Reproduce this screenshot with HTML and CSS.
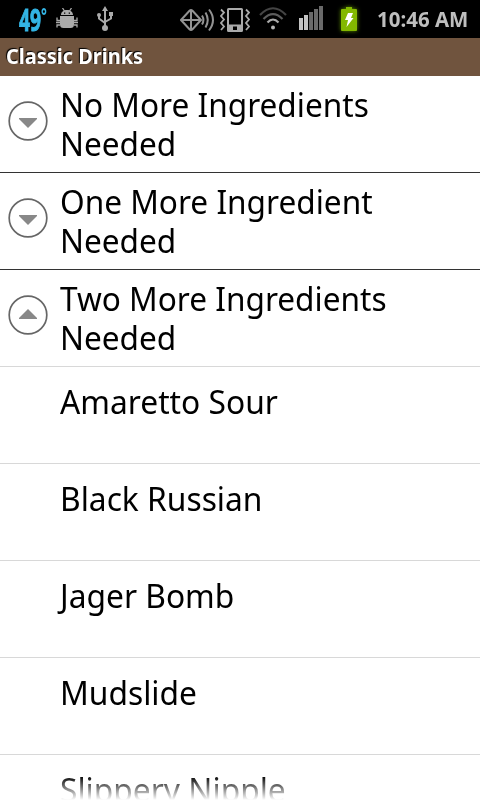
FILE: index.html
```html
<!DOCTYPE html>
<html lang="en">
<head>
  <meta charset="UTF-8">
  <meta name="viewport" content="width=device-width, initial-scale=1.0">
  <title>Classic Drinks</title>
  <link rel="stylesheet" href="styles.css">
</head>
<body>

<div class="status-bar">
  <div class="temp">49<span class="degree">°</span></div>
  <!-- debug, usb -->
  <svg class="icon debug" width="22" height="22" viewBox="0 0 22 22">
    <path fill="#aaa" d="M5 7C5 4 7.500 2 11 2s6 2 6 5zM4 8h14v8.500q0 3.500-3.500 3.500h-7Q4 20 4 16.500z"/>
    <path stroke="#aaa" stroke-width="1.300" fill="none" d="M6.500 0l2 3M15.500 0l-2 3M4 12.500H1V9.500M4 14.500H0M4 17H1v2.500M18 12.500h3V9.500M18 14.500h4M18 17h3v2.500"/>
    <path fill="#000" d="M8 4.500h1.300v1.300H8zM12.700 4.500H14v1.300h-1.300z"/>
  </svg>
  <svg class="icon usb" width="18" height="26" viewBox="0 0 18 26">
    <g fill="#aaa">
      <path d="M6 5l3-5 3 5zM13 6h4v4h-4z"/>
      <circle cx="3" cy="9" r="2"/>
      <circle cx="9" cy="22" r="3"/>
    </g>
    <path stroke="#aaa" stroke-width="2" fill="none" d="M9 4v17M3 9v3.500l6 4.500M15 9v3.500l-6 3.500"/>
  </svg>
  <!-- nfc, vibrate, wifi, signal, battery -->
  <svg class="icon nfc" width="36" height="24" viewBox="0 0 36 24">
    <g stroke="#929292" stroke-width="2" fill="none">
      <path d="M1 12L9.500 2.800Q11 1.300 12.500 2.800L21 12l-8.500 9.200Q11 22.700 9.500 21.200zM1 12h20M11 2v20"/>
      <path d="M22 7.500q2.800 4.500 0 9M25.500 4.500q4.500 7.500 0 15M29 1.500q8 10.500 0 21"/>
    </g>
  </svg>
  <svg class="icon vibrate" width="30" height="24" viewBox="0 0 30 24">
    <path fill="#aaa" fill-rule="evenodd" d="M8.500 0h13q1.500 0 1.500 1.500v21q0 1.500-1.500 1.500h-13Q7 24 7 22.500v-21Q7 0 8.500 0zM9 2v14.500h12V2zM13 18.500v3.500h4v-3.500z"/>
    <path stroke="#aaa" stroke-width="1.800" fill="none" d="M1 1.500l3 3-3 3.500 3 3.500-3 3.500 3 3.500-3 3.500M26 1.500l3 3-3 3.500 3 3.500-3 3.500 3 3.500-3 3.500"/>
  </svg>
  <svg class="icon wifi" width="28" height="24" viewBox="0 0 28 24">
    <g fill="none" stroke-width="2.200">
      <path stroke="#444" d="M1 8Q14-5.500 27 8"/>
      <path stroke="#5c5c5c" d="M4.500 12Q14 2.500 23.500 12"/>
      <path stroke="#aaa" d="M8.500 15.500Q14 9.500 19.500 15.500"/>
    </g>
    <circle cx="14" cy="20.500" r="2" fill="#b4b4b4"/>
  </svg>
  <svg class="icon signal" width="25" height="25" viewBox="0 0 25 25">
    <path fill="#c4c4c4" d="M0 13h4v12H0zM5 10h4v15H5z"/>
    <path fill="#6a6a6a" d="M10 7h4v18h-4zM15 4h4v21h-4zM20 1h4v24h-4z"/>
  </svg>
  <svg class="icon battery" width="16" height="24" viewBox="0 0 16 24">
    <path fill="#83b800" d="M5 0h6v2h4q1 0 1 1v20q0 1-1 1H1q-1 0-1-1V3q0-1 1-1h4z"/>
    <path fill="#fff" d="M7 6h5l-2 5h2.500L5.500 20 7 13H4z"/>
  </svg>
  <div class="clock">10:46 AM</div>
</div>

<div class="title-bar"><span class="title">Classic Drinks</span></div>

<div class="list">
  <div class="row group">
    <svg class="arrow" width="40" height="40" viewBox="0 0 40 40">
      <circle cx="20" cy="20" r="18.800" fill="#fff" stroke="#666" stroke-width="1.700"/>
      <path fill="#888" d="M11 17h18v1l-9 9-9-9z"/>
    </svg>
    <div class="label">No More Ingredients<br>Needed</div>
  </div>
  <div class="row group">
    <svg class="arrow" width="40" height="40" viewBox="0 0 40 40">
      <circle cx="20" cy="20" r="18.800" fill="#fff" stroke="#666" stroke-width="1.700"/>
      <path fill="#888" d="M11 17h18v1l-9 9-9-9z"/>
    </svg>
    <div class="label">One More Ingredient<br>Needed</div>
  </div>
  <div class="row group open">
    <svg class="arrow" width="40" height="40" viewBox="0 0 40 40">
      <circle cx="20" cy="20" r="18.800" fill="#fff" stroke="#666" stroke-width="1.700"/>
      <path fill="#888" d="M11 24v-1l9-9 9 9v1z"/>
    </svg>
    <div class="label">Two More Ingredients<br>Needed</div>
  </div>
  <div class="row child"><div class="name">Amaretto Sour</div></div>
  <div class="row child"><div class="name">Black Russian</div></div>
  <div class="row child"><div class="name">Jager Bomb</div></div>
  <div class="row child"><div class="name">Mudslide</div></div>
  <div class="row child"><div class="name">Slippery Nipple</div></div>
  <div class="fade"></div>
</div>

</body>
</html>
```
FILE: styles.css
```css
body {
  display: flex;
  flex-direction: column;
  width: 480px;
  height: 800px;
  margin: 0;
  overflow: hidden;
  background-color: #fff;
  color: #000;
  font-family: "Noto Sans", "Open Sans", sans-serif;
}

/* Status bar */
.status-bar {
  display: flex;
  flex: none;
  align-items: flex-start;
  box-sizing: border-box;
  height: 38px;
  padding-left: 19px;
  background-color: #000;
}

.icon {
  flex: none;
}

.temp {
  display: flex;
  flex: none;
  width: 29px;
  height: 38px;
  color: #33b5e5;
  font-family: "Open Sans", sans-serif;
  font-size: 31px;
  font-weight: bold;
  line-height: 39px;
  transform: scaleX(0.62);
  transform-origin: left;
  -webkit-text-stroke: 1px #33b5e5;
}

.degree {
  font-size: 22px;
  line-height: 29px;
  -webkit-text-stroke: 0;
}

.debug {
  margin: 8px 0 0 8px;
}

.usb {
  margin: 6px 0 0 18px;
}

.nfc {
  margin: 8px 0 0 66px;
}

.vibrate {
  margin: 8px 0 0 4px;
}

.wifi {
  margin: 7px 0 0 9px;
}

.signal {
  margin: 5px 0 0 12px;
}

.battery {
  margin: 7px 0 0 17px;
  filter: drop-shadow(0 0 2px #5b8a00);
}

.clock {
  flex: none;
  margin-left: 20px;
  color: #bebebe;
  font-size: 21px;
  font-weight: bold;
  line-height: 39px;
  white-space: nowrap;
  transform: scaleX(0.975);
  transform-origin: left;
}

/* Title */
.title-bar {
  display: flex;
  flex: none;
  height: 38px;
  padding-left: 6px;
  background-color: #70543e;
  color: #fff;
  font-size: 21px;
  font-weight: bold;
  line-height: 37px;
  text-shadow: -1px -1px 1px #000;
}

.title {
  transform: scaleX(0.95);
  transform-origin: left;
}

/* Expandable list */
.list {
  position: relative;
  flex: 1;
  overflow: hidden;
}

.row {
  display: flex;
  box-sizing: border-box;
  height: 97px;
  border-bottom: 1px solid #d8d8d8;
  font-size: 33px;
  line-height: 39px;
  white-space: nowrap;
}

.group {
  padding: 9px 0 0 8px;
  border-bottom-color: #333;
}

.open {
  border-bottom-color: #d8d8d8;
}

.arrow {
  flex: none;
  margin-top: 16px;
}

/* Slightly condensed list text */
.label,
.name {
  transform: scaleX(0.957);
  transform-origin: left;
}

.name {
  transform: scaleX(0.962);
}

.label {
  margin-left: 12px;
}

.child {
  padding: 15px 0 0 60px;
}

/* Last row fades out at the screen edge */
.fade {
  position: absolute;
  right: 0;
  bottom: 0;
  left: 0;
  height: 24px;
  background: linear-gradient(rgba(255, 255, 255, 0), #fff);
}
```
